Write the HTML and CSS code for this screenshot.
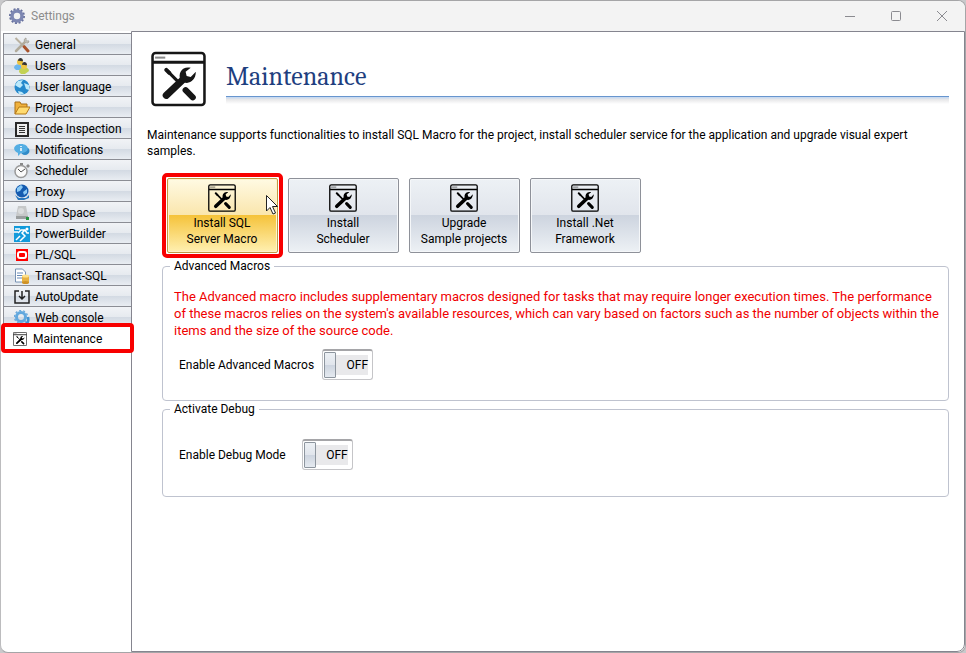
FILE: index.html
```html
<!DOCTYPE html>
<html lang="en">
<head>
<meta charset="utf-8">
<title>Settings</title>
<link rel="stylesheet" href="styles.css">
</head>
<body>
<svg class="defs" aria-hidden="true">
  <symbol id="tools" viewBox="0 0 54 54">
    <rect x="1.500" y="1.500" width="51" height="51" rx="3" fill="none" stroke="currentColor" stroke-width="2.500"/>
    <path d="M2 10.500H52" stroke="currentColor" stroke-width="3"/>
    <path d="M4 6H14" stroke="currentColor" stroke-width="2" opacity=".5"/>
    <path d="M15 18l3 3" stroke="currentColor" stroke-width="4" stroke-linecap="round"/>
    <path d="M17 20l12 12" stroke="currentColor" stroke-width="3"/>
    <path d="M34 38l7 7" stroke="currentColor" stroke-width="6" stroke-linecap="round"/>
    <path d="M15 43L32 27" stroke="currentColor" stroke-width="7" stroke-linecap="round"/>
    <path d="M39 16c-8-2-13 5-10 12 6 6 15 2 15-8l-5 5-4-1-1-4z" fill="currentColor"/>
  </symbol>
</svg>
<div class="window">
  <header class="titlebar">
    <svg class="gear" viewBox="0 0 16 16"><circle cx="8" cy="8" r="7" fill="none" stroke="#66709c" stroke-width="2" stroke-dasharray="2 1.660"/><circle cx="8" cy="8" r="5" fill="none" stroke="#7d87b2" stroke-width="3.500"/></svg>
    <span class="title">Settings</span>
    <div class="controls">
      <button aria-label="Minimize"><svg viewBox="0 0 12 12"><path d="M1 6.500h10"/></svg></button>
      <button aria-label="Maximize"><svg viewBox="0 0 12 12"><rect x="1.500" y="1.500" width="9" height="9" rx="1"/></svg></button>
      <button aria-label="Close"><svg viewBox="0 0 12 12"><path d="M1 1l10 10M11 1L1 11"/></svg></button>
    </div>
  </header>
  <div class="body">
    <nav class="tabs">
      <button class="tab"><svg viewBox="0 0 16 16"><path d="M1.500 1L9 8.500" stroke="#b9b1a0" stroke-width="2"/><path d="M10 9.500l4 4.500" stroke="#a8522a" stroke-width="3" stroke-linecap="round"/><path d="M2 14L11 5" stroke="#b1ab9c" stroke-width="2.500" stroke-linecap="round"/><path d="M12 1c-3 1-2 5 2 5l1-2-3 0z" fill="#d5d4cc" stroke="#a5a39a"/></svg>General</button>
      <button class="tab"><svg viewBox="0 0 16 16"><path d="M0 10c0-5 8-5 8 0l-2 2H2z" fill="#6cb6ec"/><path d="M5 14c0-6 10-6 10-1l-4 3H7z" fill="#c3d254"/><circle cx="6" cy="4" r="3" fill="#edc23e"/><path d="M4 3c0-4 5-4 5 0-2 1-3-1-5 0z" fill="#333"/><circle cx="10" cy="8" r="3" fill="#f1c643"/><path d="M8 7c0-4 5-4 5 0-2 1-3-1-5 0z" fill="#333"/></svg>Users</button>
      <button class="tab"><svg viewBox="0 0 16 16"><circle cx="8" cy="8" r="7.500" fill="#2589cc"/><path d="M1 6l3-4 5-1-2 3 2 2-3 3-2-1zM10 4l5 2v5l-3-1-1-3zM4 12l4 1 2 2H5z" fill="#bce9fb"/></svg>User language</button>
      <button class="tab"><svg viewBox="0 0 16 16"><path d="M1 14V2h5l1 2h6v3" fill="#f0b13c" stroke="#a86e16"/><path d="M1 14l4-7h11l-4 7z" fill="#ffdb70" stroke="#b57917"/></svg>Project</button>
      <button class="tab"><svg viewBox="0 0 16 16"><path d="M2 2h12v13H2z" fill="#eee" stroke="#292929" stroke-width="2"/><path d="M5 1h6v2H5z" fill="#292929"/><path d="M5 5.500h6M5 7.500h6M5 9.500h6M5 11.500h6" stroke="#333"/></svg>Code Inspection</button>
      <button class="tab"><svg viewBox="0 0 16 16"><ellipse cx="11" cy="9" rx="4.500" ry="4" fill="#318bc8"/><path d="M7 2c9 0 9 9 0 9l-3 3 0-3c-6-2-5-9 3-9z" fill="#54aee3"/><path d="M7 6v3M7 4v1" stroke="#fff" stroke-width="1.500"/></svg>Notifications</button>
      <button class="tab"><svg viewBox="0 0 16 16"><path d="M12 3l2-2 2 2-2 2M6 0h3v2H6z" fill="#888"/><circle cx="7" cy="8.500" r="6" fill="#fafafa" stroke="#999" stroke-width="1.500"/><path d="M4 6l3 3 4-3" fill="none" stroke="#555"/></svg>Scheduler</button>
      <button class="tab"><svg viewBox="0 0 16 16"><path d="M1 11l4 3h7l3-3v3l-5 2H4z" fill="#2676bd"/><circle cx="8" cy="7" r="6.500" fill="#145bb0"/><path d="M3 4l4-3 2 2-3 4-3 1zM9 8l4-3v4l-3 2z" fill="#8ccaf5"/></svg>Proxy</button>
      <button class="tab"><svg viewBox="0 0 16 16"><path d="M4 1h8l2 10H2z" fill="#c6c8c9"/><path d="M2 11h12v3H2z" fill="#9a9e9f"/><circle cx="7" cy="6" r="3" fill="#dadcdd"/><path d="M12 12h3v3h-3z" fill="#289342"/></svg>HDD Space</button>
      <button class="tab"><svg viewBox="0 0 16 16"><path d="M0 0h16v16H0z" fill="#129adb"/><path d="M1 3h5M0 6h4M2 14l4-4M6 15l5-5-3-3 3-3 2 3h2M4 7l3-3h4" fill="none" stroke="#fff" stroke-width="1.500"/><circle cx="13" cy="3" r="1.500" fill="#fff"/></svg>PowerBuilder</button>
      <button class="tab"><svg viewBox="0 0 16 16"><path d="M2 2h12v12H2z" fill="#f00"/><rect x="4" y="5" width="8" height="6" rx="2" fill="none" stroke="#fff" stroke-width="2"/></svg>PL/SQL</button>
      <button class="tab"><svg viewBox="0 0 16 16"><path d="M1.500 1h7l3 3v10h-10z" fill="#fff" stroke="#7792b3"/><path d="M3 5h6M3 7.500h6M3 10h5" stroke="#6689b6"/><path d="M8 8h7v7H8z" fill="#e7b142"/><ellipse cx="11.500" cy="8" rx="3.500" ry="1.500" fill="#ffe18a"/><ellipse cx="11.500" cy="14.500" rx="3.500" ry="1.500" fill="#cf9226"/></svg>Transact-SQL</button>
      <button class="tab"><svg viewBox="0 0 16 16"><path d="M5 2H1v12h14V2h-4M8 2v8M5 7l3 3 3-3" fill="none" stroke="#222" stroke-width="1.500"/></svg>AutoUpdate</button>
      <button class="tab"><svg viewBox="0 0 16 16"><circle cx="7" cy="7" r="4.500" fill="none" stroke="#62a8de" stroke-width="3"/><circle cx="7" cy="7" r="6.500" fill="none" stroke="#6baadd" stroke-width="1.500" stroke-dasharray="2 2"/><path d="M9 15c5-1 6-4 5-8" fill="none" stroke="#4293d2" stroke-width="2.500"/></svg>Web console</button>
      <button class="tab selected"><svg><use href="#tools"/></svg>Maintenance</button>
    </nav>
    <main class="panel">
      <div class="heading">
        <svg class="hero"><use href="#tools"/></svg>
        <h1>Maintenance</h1>
      </div>
      <p class="intro">Maintenance supports functionalities to install SQL Macro for the project, install scheduler service for the application and upgrade visual expert<br>samples.</p>
      <div class="actions">
        <button class="action hot"><svg><use href="#tools"/></svg>Install SQL<br>Server Macro
          <svg class="cursor" viewBox="0 0 12 20"><path d="M.5.500v15.500l3.500-3.500 3 6.500 2.500-1-3-6.500h5z" fill="#fff" stroke="#222"/></svg></button>
        <button class="action"><svg><use href="#tools"/></svg>Install<br>Scheduler</button>
        <button class="action"><svg><use href="#tools"/></svg>Upgrade<br>Sample projects</button>
        <button class="action"><svg><use href="#tools"/></svg>Install .Net<br>Framework</button>
      </div>
      <fieldset class="macros">
        <legend>Advanced Macros</legend>
        <p class="warning">The Advanced macro includes supplementary macros designed for tasks that may require longer execution times. The performance<br>of these macros relies on the system's available resources, which can vary based on factors such as the number of objects within the<br>items and the size of the source code.</p>
        <div class="option"><label for="adv">Enable Advanced Macros</label><span class="switch"><input type="checkbox" id="adv"><span class="state">OFF</span></span></div>
      </fieldset>
      <fieldset class="debug">
        <legend>Activate Debug</legend>
        <div class="option wide"><label for="dbg">Enable Debug Mode</label><span class="switch"><input type="checkbox" id="dbg"><span class="state">OFF</span></span></div>
      </fieldset>
    </main>
  </div>
</div>
</body>
</html>
```
FILE: styles.css
```css
* { box-sizing: border-box; }
body {
  margin: 0;
  background: #c9c9cb;
  color: #000;
  font: 12px/16px Roboto, "Noto Sans", sans-serif;
}
button { font: inherit; color: inherit; padding: 0; margin: 0; }
.defs { position: absolute; width: 0; height: 0; }
.window {
  display: flex;
  flex-direction: column;
  min-height: 100vh;
  border: 1px solid #a5a5a7;
  border-left-color: #bcbcbe;
  border-radius: 8px;
  background: #fff;
  overflow: hidden;
}
.titlebar {
  display: flex;
  align-items: center;
  height: 30px;
  padding-left: 8px;
  background: #f3f3f3;
  color: #8c8c8c;
}
.gear { width: 16px; height: 16px; }
.title { margin-left: 6px; }
.controls { display: flex; margin-left: auto; }
.controls button {
  display: grid;
  place-items: center;
  width: 46px;
  height: 28px;
  border: 0;
  background: none;
}
.controls svg { width: 12px; height: 12px; fill: none; stroke: #8b8b90; }
.body { display: flex; flex: 1; }
.tabs { width: 130px; padding: 2px 0 0 2px; flex: none; }
.tab {
  display: flex;
  align-items: center;
  gap: 5px;
  width: 100%;
  height: 21px;
  padding: 1px 0 0 10px;
  border: 1px solid #8b8d94;
  border-width: 1px 0 0 1px;
  background: linear-gradient(#f1f3f6, #e6eaef 50%, #d3dae3 51%, #e9edf2);
  white-space: nowrap;
}
.tab svg { width: 16px; height: 16px; flex: none; }
.tab.selected {
  position: relative;
  gap: 6px;
  height: 23px;
  padding: 0 0 0 9px;
  background: #fff;
  border-color: #fff;
}
.tab.selected svg { width: 14px; height: 14px; }
.tab.selected::after {
  content: "";
  position: absolute;
  inset: -5px -3px -3px -3px;
  border: 4px solid #f80000;
  border-radius: 4px;
}
.panel {
  flex: 1;
  min-width: 0;
  border: 1px solid #85858f;
  border-radius: 0 0 8px 0;
  padding: 18px 15px 20px 15px;
}
.heading { display: flex; gap: 20px; padding-left: 4px; }
.hero { width: 55px; height: 56px; margin-top: 1px; color: #161616; }
h1 {
  flex: 1;
  height: 56px;
  margin: 0;
  padding-top: 11px;
  background: linear-gradient(#6795ce 0 1px, #c9daf0 1px 2px, #e4e4e6 3px, #fff 8px) 0 46px / 100% 8px no-repeat;
  color: #1f3f7f;
  font: 26px/32px Cambria, "Liberation Serif", serif;
}
.intro { margin: 20px 0 0; }
.actions { display: flex; gap: 10px; margin: 19px 0 0 20px; }
.action {
  position: relative;
  display: block;
  width: 111px;
  height: 75px;
  padding-right: 1px;
  border: 1px solid #8e9199;
  border-radius: 2px;
  box-shadow: inset 0 0 0 1px #f5f7f9;
  background: linear-gradient(#edf1f5, #e1e5ec 49%, #cdd4df 50%, #edf1f5);
}
.action > svg:first-child { display: block; width: 28px; height: 28px; margin: 0 auto 3px; }
.hot {
  border-color: #bf9b45;
  box-shadow: inset 0 0 0 1px #fff3cc;
  background: linear-gradient(#fffae3, #fae6ad 49%, #f5c33b 50%, #fff0b1);
}
.hot::after {
  content: "";
  position: absolute;
  inset: -6px;
  border: 4px solid #f80000;
  border-radius: 5px;
}
.action .cursor { position: absolute; width: 12px; height: 20px; top: 16px; right: -1px; z-index: 1; }
fieldset {
  min-width: 0;
  margin: 0 0 0 15px;
  padding: 0 2px 0 11px;
  border: 1px solid #bfc3cf;
  border-radius: 4px;
}
legend { margin-left: -4px; padding: 0 4px; line-height: 16px; }
.macros { margin-top: 5px; height: 143px; }
.debug { height: 96px; }
.warning { margin: 14px 0 0; color: #f00000; font-size: 13px; line-height: 17px; }
.option { display: flex; align-items: center; gap: 8px; margin-left: 5px; }
.macros .option { margin-top: 10px; }
.debug .option { margin-top: 22px; }
.option.wide { gap: 16px; }
.switch {
  display: flex;
  align-items: center;
  width: 51px;
  height: 31px;
  padding: 1px 4px 1px 1px;
  border: 1px solid #c5c5c8;
  border-top: 2px solid #a5a5a8;
  border-radius: 3px;
}
.switch input {
  appearance: none;
  width: 12px;
  height: 26px;
  margin: 0;
  border: 1px solid #8d959e;
  border-radius: 1px;
  background: linear-gradient(#edf1f5, #e1e5ec 49%, #cdd4df 50%, #e5eaf0);
}
.state { flex: 1; height: 20px; line-height: 20px; background: #e9e9eb; text-align: right; }
```
